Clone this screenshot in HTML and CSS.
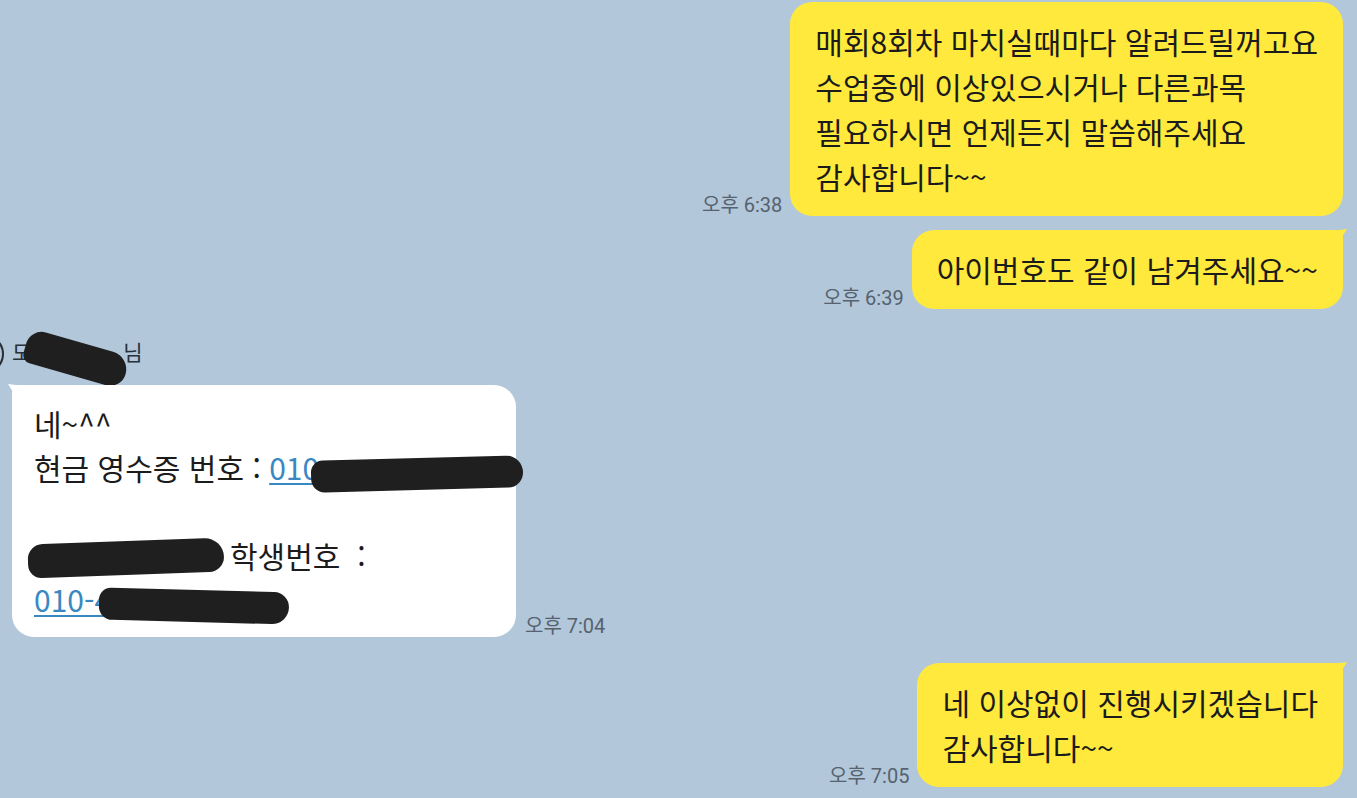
FILE: index.html
```html
<!DOCTYPE html>
<html lang="ko">
<head>
  <meta charset="UTF-8">
  <title>채팅</title>
  <link rel="stylesheet" href="styles.css">
</head>
<body>
  <div class="chat">

    <div class="msg mine first">
      <span class="time">오후 6:38</span>
      <div class="bubble">매회8회차 마치실때마다 알려드릴꺼고요<br>수업중에 이상있으시거나 다른과목<br>필요하시면 언제든지 말씀해주세요<br>감사합니다~~</div>
    </div>

    <div class="msg mine">
      <span class="time">오후 6:39</span>
      <div class="bubble tail">아이번호도 같이 남겨주세요~~</div>
    </div>

    <div class="sender">
      <span class="avatar"></span>
      <span class="name">도<span class="redact name-blob"></span>님</span>
    </div>

    <div class="msg other">
      <div class="bubble tail">
        네~^^<br>
        현금 영수증 번호 : <a class="link" href="#">010</a><span class="redact blob-a"></span><br>
        <br>
        <span class="redact blob-b"></span>학생번호&nbsp; :<br>
        <a class="link" href="#">010-4</a><span class="redact blob-c"></span>
      </div>
      <span class="time">오후 7:04</span>
    </div>

    <div class="msg mine last">
      <span class="time">오후 7:05</span>
      <div class="bubble tail">네 이상없이 진행시키겠습니다<br>감사합니다~~</div>
    </div>

  </div>
</body>
</html>
```

FILE: styles.css
```css
body {
  margin: 0;
  background-color: #b2c7da;
  font-family: "Noto Sans CJK KR", "Noto Sans", sans-serif;
  color: #1b1b1b;
}

.chat {
  display: flex;
  flex-direction: column;
  padding: 2px 14px 0 12px;
  height: 798px;
  box-sizing: border-box;
  overflow: hidden;
}

/* message rows */
.msg {
  display: flex;
  align-items: flex-end;
  gap: 8px;
}

.msg.mine {
  justify-content: flex-end;
  margin-top: 14px;
}

.msg.mine.first {
  margin-top: 0;
}

.msg.mine.last {
  margin-top: 26px;
}

.msg.other {
  justify-content: flex-start;
  margin-top: 13px;
}

.bubble {
  position: relative;
  padding: 17px 25px;
  border-radius: 22px;
  font-size: 30px;
  line-height: 45px;
  white-space: nowrap;
}

.mine .bubble {
  background-color: #ffe93c;
}

.other .bubble {
  background-color: #ffffff;
  width: 504px;
  box-sizing: border-box;
  padding: 16px 22px;
  line-height: 44px;
}

/* little spike on the first bubble of a group */
.mine .bubble.tail {
  border-top-right-radius: 8px;
}

.mine .bubble.tail::after {
  content: "";
  position: absolute;
  top: -1px;
  right: -4px;
  width: 16px;
  height: 14px;
  background-color: #ffe93c;
  clip-path: polygon(0 15%, 100% 0, 45% 100%, 0 100%);
}

.other .bubble.tail {
  border-top-left-radius: 8px;
}

.other .bubble.tail::after {
  content: "";
  position: absolute;
  top: -1px;
  left: -4px;
  width: 16px;
  height: 14px;
  background-color: #ffffff;
  clip-path: polygon(0 0, 100% 15%, 100% 100%, 55% 100%);
}

.time {
  font-family: Roboto, "Noto Sans CJK KR", sans-serif;
  font-size: 20px;
  line-height: 22px;
  color: #56626e;
  white-space: nowrap;
}

.other .time {
  margin-left: 1px;
}

/* sender name row */
.sender {
  display: flex;
  align-items: center;
  margin-top: 27px;
  height: 36px;
}

.avatar {
  width: 40px;
  height: 40px;
  margin-left: -48px;
  margin-right: 8px;
  border-radius: 50%;
  border: 2px solid #2a2e33;
  box-sizing: border-box;
}

.name {
  font-size: 21px;
  color: #27313b;
  white-space: nowrap;
}

.link {
  color: #3a88c2;
  text-decoration: underline;
  text-underline-offset: 3px;
  text-decoration-thickness: 2px;
}

/* privacy scribbles */
.redact {
  display: inline-block;
  background-color: #1f1f1f;
  border-radius: 18px;
  vertical-align: middle;
}

.name-blob {
  width: 104px;
  height: 34px;
  margin: 0 -6px 0 -6px;
  transform: rotate(16deg) translateY(4px);
  border-radius: 26px 30px 26px 14px;
}

.blob-a {
  width: 212px;
  height: 32px;
  margin-left: -8px;
  margin-right: -40px;
  transform: rotate(-1.5deg) translateY(2px);
  border-radius: 14px 20px 18px 16px;
}

.blob-b {
  width: 196px;
  height: 34px;
  margin-left: -6px;
  margin-right: 6px;
  transform: rotate(-2deg) translateY(-2px);
  border-radius: 16px 20px 16px 14px;
}

.blob-c {
  width: 190px;
  height: 32px;
  margin-left: -12px;
  transform: rotate(1.5deg) translateY(2px);
  border-radius: 14px 18px 20px 16px;
}
```
